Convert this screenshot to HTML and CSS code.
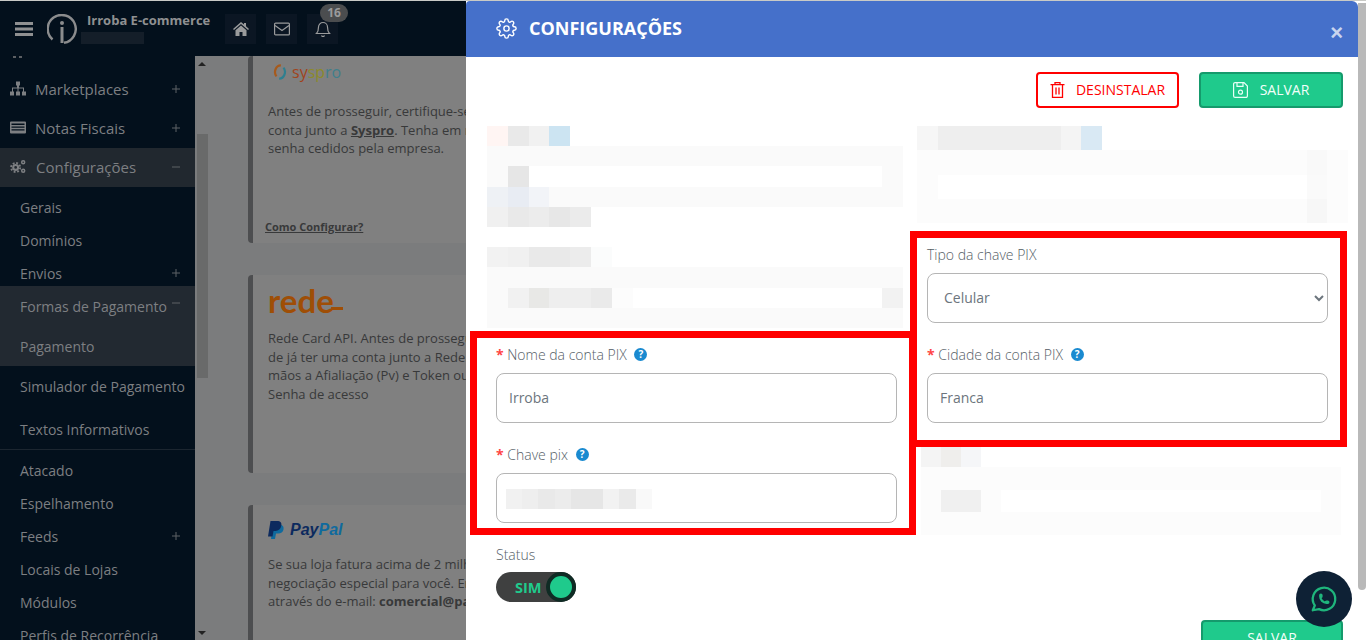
FILE: index.html
```html
<!DOCTYPE html>
<html lang="pt-BR">
<head>
  <meta charset="UTF-8" />
  <title>Configurações - Irroba E-commerce</title>
  <link rel="stylesheet" href="styles.css">
</head>
<body>
  <header class="topbar">
    <svg class="burger" viewBox="0 0 18 14"><path d="M0 0h18v3H0zM0 5.500h18v3H0zM0 11h18v3H0z"/></svg>
    <svg class="brand-logo" viewBox="0 0 30 30" fill="none">
      <path d="M5.500 25.500A14 14 0 1 1 17 28.800" stroke="#8b8c8d" stroke-width="2.400"/>
      <circle cx="15" cy="9" r="2" fill="#8b8c8d"/>
      <path d="M15 13v16" stroke="#8b8c8d" stroke-width="3"/>
    </svg>
    <div class="brand">
      <b>Irroba E-commerce</b>
      <span class="brand-hidden"></span>
    </div>
    <div class="top-actions">
      <a class="top-btn"><svg viewBox="0 0 16 14"><path fill="#9a9b9c" d="M8 0l3 2.600V1h2v3.300L16 7l-1 1-7-6-7 6-1-1zM2.500 8.200L8 3.500l5.500 4.700V14H9.500v-4h-3v4h-4z"/></svg></a>
      <a class="top-btn"><svg viewBox="0 0 16 13" fill="none" stroke="#9a9b9c" stroke-width="1.200"><rect x=".6" y=".6" width="14.800" height="11.800" rx="1"/><path d="M1 3l7 5 7-5"/></svg></a>
      <a class="top-btn"><svg viewBox="0 0 14 16" fill="none" stroke="#9a9b9c" stroke-width="1.200"><path d="M7 1.500a4.500 4.500 0 0 0-4.500 4.500c0 4-1.500 6-2 6.500h13c-.5-.5-2-2.500-2-6.500A4.500 4.500 0 0 0 7 1.500zM5.500 14.500a1.600 1.600 0 0 0 3 0"/></svg><span class="badge">16</span></a>
    </div>
  </header>

  <div class="shell">
    <nav class="sidebar">
      <div class="nav-cut"><i></i><i></i></div>
      <a class="nav-main">
        <svg viewBox="0 0 16 14"><path fill="#7d7f82" d="M6 0h4v4H9v2h5v4h2v4h-4v-4h1V7H8.500v3H10v4H6v-4h1.500V7H3v3h1v4H0v-4h2V6h5V4H6z"/></svg>
        Marketplaces<svg class="sign" viewBox="0 0 8 8"><path d="M4 0v8M0 4h8"/></svg>
      </a>
      <a class="nav-main">
        <svg viewBox="0 0 16 14"><path fill="#7d7f82" fill-rule="evenodd" d="M1 1h14a1 1 0 0 1 1 1v10a1 1 0 0 1-1 1H1a1 1 0 0 1-1-1V2a1 1 0 0 1 1-1zm.500 2v1.500h13V3zm0 3v1.200h13V6zm0 2.700v1.200h13V8.700z"/></svg>
        Notas Fiscais<svg class="sign" viewBox="0 0 8 8"><path d="M4 0v8M0 4h8"/></svg>
      </a>
      <a class="nav-main nav-open">
        <svg viewBox="0 0 17 15"><g fill="none" stroke="#7d7f82"><circle cx="6" cy="8.500" r="2.600" stroke-width="2.200"/><circle cx="6" cy="8.500" r="4.800" stroke-width="2" stroke-dasharray="2 1.770"/><circle cx="14" cy="3" r="1.600" stroke-width="1.600"/><circle cx="14" cy="12" r="1.600" stroke-width="1.600"/></g></svg>
        Configurações<svg class="sign" viewBox="0 0 8 8"><path d="M0 4h8"/></svg>
      </a>
      <a class="nav-sub nav-first">Gerais</a>
      <a class="nav-sub">Domínios</a>
      <a class="nav-sub nav-envios">Envios<svg class="sign" viewBox="0 0 8 8"><path d="M4 0v8M0 4h8"/></svg></a>
      <div class="nav-group">
        <a class="nav-sub nav-tall">Formas de Pagamento<svg class="sign sign-up" viewBox="0 0 8 8"><path d="M0 4h8"/></svg></a>
        <a class="nav-sub nav-tall">Pagamento</a>
      </div>
      <a class="nav-sub nav-tall">Simulador de Pagamento</a>
      <a class="nav-sub nav-tall nav-last">Textos Informativos</a>
      <a class="nav-sub nav-first">Atacado</a>
      <a class="nav-sub">Espelhamento</a>
      <a class="nav-sub">Feeds<svg class="sign" viewBox="0 0 8 8"><path d="M4 0v8M0 4h8"/></svg></a>
      <a class="nav-sub">Locais de Lojas</a>
      <a class="nav-sub">Módulos</a>
      <a class="nav-sub">Perfis de Recorrência</a>
    </nav>

    <div class="side-scroll">
      <span class="arrow arrow-up"></span>
      <span class="thumb"></span>
      <span class="arrow arrow-down"></span>
    </div>

    <main class="content">
      <section class="card card-syspro">
        <div class="logo-syspro">
          <svg viewBox="0 0 16 18" fill="none" stroke-width="2.500"><path d="M9 1.500a6.500 7.500 0 0 0-5 12.500" stroke="#a65a1c"/><path d="M7 16.500a6.500 7.500 0 0 0 5-12.500" stroke="#2f7f8f"/></svg>
          <span class="logo-word"><span class="sy">sy</span><span class="sp">sp</span><span class="ro">ro</span></span>
        </div>
        <p>Antes de prosseguir, certifique-se de já ter uma<br>conta junto a <b><u>Syspro</u></b>. Tenha em mãos os dados e<br>senha cedidos pela empresa.</p>
        <a class="how-to">Como Configurar?</a>
      </section>
      <section class="card card-rede">
        <div class="logo-rede"><span>rede</span><i></i></div>
        <p>Rede Card API. Antes de prosseguir, certifique-se<br>de já ter uma conta junto a Rede. Tenha em<br>mãos a Afialiação (Pv) e Token ou<br>Senha de acesso</p>
      </section>
      <section class="card card-paypal">
        <div class="logo-paypal">
          <svg viewBox="0 0 16 18"><path fill="#0f6a9e" d="M5 4h7c3 0 4 2 3.500 4.500S13 12.500 10 12.500H8L7 18H3z"/><path fill="#0c2a5e" d="M2.500 0H9c3.500 0 5 2 4.300 4.800C12.700 8 10.500 10 7.500 10H5.500L4.500 15.500H0z"/></svg>
          <span class="logo-word"><span class="pay">Pay</span><span class="pal">Pal</span></span>
        </div>
        <p>Se sua loja fatura acima de 2 milhões, temos uma<br>negociação especial para você. Entre em contato<br>através do e-mail: <b>comercial@paypal.com</b></p>
      </section>
    </main>
  </div>

  <div class="modal">
    <div class="modal-head">
      <svg class="head-gear" viewBox="0 0 24 24" fill="none" stroke="#fff" stroke-width="1.600"><circle cx="12" cy="12" r="3"/><path d="M19.400 15a1.650 1.650 0 0 0 .33 1.820l.06.06a2 2 0 0 1 0 2.830 2 2 0 0 1-2.830 0l-.06-.06a1.650 1.650 0 0 0-1.820-.33 1.650 1.650 0 0 0-1 1.510V21a2 2 0 0 1-2 2 2 2 0 0 1-2-2v-.09A1.650 1.650 0 0 0 9 19.400a1.650 1.650 0 0 0-1.820.33l-.06.06a2 2 0 0 1-2.830 0 2 2 0 0 1 0-2.830l.06-.06a1.650 1.650 0 0 0 .33-1.820 1.650 1.650 0 0 0-1.510-1H3a2 2 0 0 1-2-2 2 2 0 0 1 2-2h.09A1.650 1.650 0 0 0 4.600 9a1.650 1.650 0 0 0-.33-1.820l-.06-.06a2 2 0 0 1 0-2.830 2 2 0 0 1 2.830 0l.06.06a1.650 1.650 0 0 0 1.820.33H9a1.650 1.650 0 0 0 1-1.510V3a2 2 0 0 1 2-2 2 2 0 0 1 2 2v.09a1.650 1.650 0 0 0 1 1.510 1.650 1.650 0 0 0 1.820-.33l.06-.06a2 2 0 0 1 2.830 0 2 2 0 0 1 0 2.830l-.06.06a1.650 1.650 0 0 0-.33 1.820V9a1.650 1.650 0 0 0 1.510 1H21a2 2 0 0 1 2 2 2 2 0 0 1-2 2h-.09a1.650 1.650 0 0 0-1.510 1z"/></svg>
      <h2>CONFIGURAÇÕES</h2>
      <span class="close">×</span>
    </div>

    <div class="modal-body">
      <div class="modal-actions">
        <button class="btn btn-danger">
          <svg viewBox="0 0 14 16" fill="none" stroke="#f00" stroke-width="1.300"><path d="M0 2.700h14M4.500 2.700V.7h5v2M2 2.700V15.300h10V2.700M5.500 5.500v7M8.500 5.500v7"/></svg>
          DESINSTALAR
        </button>
        <button class="btn btn-save">
          <svg viewBox="0 0 15 16" fill="none" stroke="#e8fff6" stroke-width="1.200"><path d="M.6 2.100a1.500 1.500 0 0 1 1.500-1.500H11l3.400 3.400v9.900a1.500 1.500 0 0 1-1.500 1.500H2.100a1.500 1.500 0 0 1-1.500-1.500z"/><path d="M4 .6v3.800h6V.6"/><circle cx="7.500" cy="10.200" r="2"/></svg>
          SALVAR
        </button>
      </div>

      <div class="columns">
        <div class="col-left">
          <div class="blur">
            <div class="bl h20"><i class="x21 c-fff5"></i><i class="x21 c-e9"></i><i class="x20 c-f1"></i><i class="x21 c-blue"></i></div>
            <div class="bl h20 fill-fa"></div>
            <div class="bl h21 fill-fa"><i class="x21"></i><i class="x21 c-e6"></i><i class="grow c-ff"></i><i class="x21"></i></div>
            <div class="bl h20 fill-fa"><i class="x21 c-ef"></i><i class="x21 c-e8b"></i><i class="x20 c-f3"></i></div>
            <div class="bl h20"><i class="x21 c-f0"></i><i class="x21 c-e9"></i><i class="x20 c-ec"></i><i class="x21 c-e7"></i><i class="x21 c-eb"></i></div>
            <div class="bl h20"></div>
            <div class="bl h20"><i class="x21 c-f2"></i><i class="x21 c-f0"></i><i class="x20 c-e9"></i><i class="x21 c-e9"></i><i class="x21 c-ec"></i><i class="x21 c-fb"></i></div>
            <div class="bl h21 fill-fa"></div>
            <div class="bl h20 fill-fa"><i class="x21"></i><i class="x21 c-f1"></i><i class="x20 c-e8"></i><i class="x42 c-ee"></i><i class="x21 c-ea"></i><i class="x21 c-fc"></i><i class="grow c-ff"></i><i class="x21 c-f2"></i></div>
            <div class="bl h20 fill-fa"></div>
          </div>

          <div class="pix-box pix-left">
            <div class="field">
              <label><em>*</em> Nome da conta PIX <span class="help">?</span></label>
              <input type="text" value="Irroba" />
            </div>
            <div class="field">
              <label><em>*</em> Chave pix <span class="help">?</span></label>
              <div class="fake-input">
                <div class="bl key"><i class="x16 c-f1"></i><i class="x16 c-ee"></i><i class="x17 c-e9"></i><i class="x16 c-ec"></i><i class="x32 c-e6"></i><i class="x16 c-f2"></i><i class="x17 c-ea"></i><i class="x16 c-f9"></i></div>
              </div>
            </div>
          </div>

          <div class="status">
            <label>Status</label>
            <div class="toggle"><span>SIM</span><i></i></div>
          </div>
        </div>

        <div class="col-right">
          <div class="blur">
            <div class="bl h24"><i class="x21 c-f6"></i><i class="x123 c-ee"></i><i class="x20 c-f4"></i><i class="x21 c-blue2"></i></div>
            <div class="bl h25 fill-fc"><i class="grow"></i><i class="x20 c-f9"></i><i class="x21"></i></div>
            <div class="bl h24 fill-fc"><i class="x21"></i><i class="grow c-ff"></i><i class="x20 c-fa"></i><i class="x21"></i></div>
            <div class="bl h24 fill-fc"><i class="grow"></i><i class="x20 c-f7"></i><i class="x21"></i></div>
          </div>

          <div class="pix-box pix-right">
            <div class="field">
              <label>Tipo da chave PIX</label>
              <select><option>Celular</option></select>
            </div>
            <div class="field">
              <label><em>*</em> Cidade da conta PIX <span class="help">?</span></label>
              <input type="text" value="Franca" />
            </div>
          </div>

          <div class="blur blur-low">
            <div class="bl h20"><i class="x20 c-f4"></i><i class="x20 c-ef2"></i><i class="x20 c-f6b"></i></div>
            <div class="bl h23 fill-fc"></div>
            <div class="bl h22 fill-fc"><i class="x20"></i><i class="x40 c-f0"></i><i class="x20"></i><i class="grow c-ff"></i><i class="x20"></i></div>
            <div class="bl h23 fill-fc"></div>
          </div>
        </div>
      </div>

      <div class="modal-foot">
        <button class="btn btn-save btn-foot">SALVAR</button>
      </div>
    </div>

    <span class="modal-scroll"></span>
    <a class="whats">
      <svg viewBox="0 0 24 24" fill="none" stroke="#1fb57c" stroke-width="1.800" stroke-linecap="round" stroke-linejoin="round"><path d="M3 21l1.650-3.800a9 9 0 1 1 3.400 2.900L3 21"/><path d="M9 10a.5.5 0 0 0 1 0V9a.5.5 0 0 0-1 0v1a5 5 0 0 0 5 5h1a.5.5 0 0 0 0-1h-1a.5.5 0 0 0 0 1"/></svg>
    </a>
  </div>
</body>
</html>
```

FILE: styles.css
```css
* {
  box-sizing: border-box;
  margin: 0;
  padding: 0;
}

html, body {
  height: 640px;
  overflow: hidden;
}

body {
  font-family: 'Open Sans', sans-serif;
  background: #7b7c7d;
  display: flex;
  flex-direction: column;
}

/* top bar */
.topbar {
  height: 56px;
  flex: none;
  background: #03101c;
  border-top: 1px solid #c9cac6;
  display: flex;
  align-items: center;
  position: relative;
}

.burger {
  width: 18px;
  height: 14px;
  margin: 0 0 0 15px;
  fill: #8f9091;
}

.brand-logo {
  width: 30px;
  height: 30px;
  margin-left: 14px;
}

.brand {
  margin-left: 10px;
  color: #8f9091;
  font-size: 13px;
  line-height: 16px;
  position: relative;
  width: 138px;
  height: 32px;
  margin-top: 6px;
}

.brand b {
  display: block;
  white-space: nowrap;
  margin-top: -4px;
}

.brand-hidden {
  display: block;
  width: 63px;
  height: 12px;
  margin: 4px 0 0 -6px;
  background: #141e29;
}

.top-actions {
  display: flex;
  gap: 10px;
  margin-top: 1px;
}

.top-btn {
  width: 31px;
  height: 30px;
  background: #0b1623;
  display: flex;
  align-items: center;
  justify-content: center;
  position: relative;
}

.top-btn svg {
  width: 16px;
  height: 16px;
}

.badge {
  position: absolute;
  top: -10px;
  left: 13px;
  width: 28px;
  height: 18px;
  border-radius: 9px;
  background: #4b4d4f;
  color: #9a9b9c;
  font-size: 12px;
  font-weight: 700;
  line-height: 18px;
  text-align: center;
}

/* sidebar */
.shell {
  flex: 1;
  display: flex;
  min-height: 0;
}

.sidebar {
  width: 195px;
  flex: none;
  background: #03101c;
  color: #7d7f82;
  font-size: 14px;
  overflow: hidden;
}

.nav-cut {
  height: 14px;
  display: flex;
  gap: 3px;
  padding-left: 13px;
}

.nav-cut i {
  width: 3px;
  height: 2px;
  background: #5c5f63;
}

.nav-main {
  height: 39px;
  display: flex;
  align-items: center;
  padding: 0 0 2px 10px;
  font-size: 15px;
  position: relative;
}

.nav-main > svg:first-child {
  width: 16px;
  height: 15px;
  margin-right: 9px;
  flex: none;
}

.nav-open {
  background: #21282f;
}

.nav-open > svg:first-child {
  margin-right: 10px;
}

.sign {
  position: absolute;
  right: 15px;
  top: 50%;
  width: 8px;
  height: 8px;
  margin-top: -5px;
  stroke: #5f6266;
  stroke-width: 1;
  fill: none;
}

.nav-sub {
  height: 33px;
  display: flex;
  align-items: center;
  padding-left: 20px;
  position: relative;
  white-space: nowrap;
}

.nav-first {
  margin-top: 4px;
}

.nav-envios {
  margin-bottom: -4px;
}

.nav-tall {
  height: 40px;
}

.sign-up {
  margin-top: -7px;
}

.nav-group {
  background: #222931;
  position: relative;
}

.nav-last {
  margin-top: 3px;
  height: 41px;
  border-bottom: 1px solid #1c2630;
}

/* scrollbar next to the sidebar */
.side-scroll {
  width: 13px;
  flex: none;
  position: relative;
}

.thumb {
  position: absolute;
  left: 2px;
  right: 0;
  top: 78px;
  height: 244px;
  background: #696a6a;
}

.arrow {
  position: absolute;
  left: 3px;
  border-left: 4px solid transparent;
  border-right: 4px solid transparent;
}

.arrow-up {
  top: 6px;
  border-bottom: 4px solid #222;
}

.arrow-down {
  bottom: 5px;
  border-top: 4px solid #222;
}

/* payment cards behind the modal */
.content {
  flex: 1;
  padding-left: 40px;
  overflow: hidden;
  color: #38393a;
  font-size: 13px;
  line-height: 18.500px;
}

.card {
  background: #808080;
  border-left: 5px solid #4d4e50;
  border-radius: 4px;
  padding-left: 15px;
  position: relative;
  white-space: nowrap;
}

.card-syspro {
  height: 187px;
  margin-bottom: 32px;
  padding-top: 46px;
}

.card-rede {
  height: 198px;
  margin-bottom: 32px;
  padding-top: 54px;
}

.card-paypal {
  height: 180px;
  padding-top: 50px;
}

.logo-syspro {
  position: absolute;
  left: 20px;
  top: 6px;
  display: flex;
  align-items: center;
  font-size: 16px;
  line-height: 20px;
}

.logo-syspro svg {
  width: 14px;
  height: 18px;
  margin-right: 5px;
}

.sy { color: #a1441c; }
.sp { color: #8c8a2a; }
.ro { color: #3f7f8c; }

.how-to {
  position: absolute;
  left: 12px;
  top: 162px;
  font-size: 11px;
  font-weight: 700;
  line-height: 18px;
  text-decoration: underline;
}

.logo-rede {
  position: absolute;
  left: 15px;
  top: 10px;
  color: #9f4e06;
  font-family: 'Lato', sans-serif;
  font-size: 33px;
  font-weight: 700;
  line-height: 30px;
  display: flex;
  align-items: flex-end;
}

.logo-rede i {
  width: 12px;
  height: 3px;
  margin: 0 0 5px -3px;
  background: #9f4e06;
}

.logo-paypal {
  position: absolute;
  left: 15px;
  top: 16px;
  display: flex;
  align-items: center;
  font-family: 'Liberation Sans', sans-serif;
  font-style: italic;
  font-weight: 700;
  font-size: 16px;
  line-height: 18px;
}

.logo-paypal svg {
  width: 16px;
  height: 18px;
  margin-right: 6px;
}

.pay { color: #0c2a5e; }
.pal { color: #0f6a9e; }

/* modal */
.modal {
  position: absolute;
  top: 1px;
  left: 466px;
  right: 0;
  bottom: 0;
  background: #fff;
  overflow: hidden;
  color: #6c757d;
  font-size: 14px;
}

.modal-head {
  height: 56px;
  width: 892px;
  background: #4570ca;
  border-radius: 4px 6px 0 0;
  display: flex;
  align-items: center;
  padding-left: 30px;
  position: relative;
  color: #fff;
}

.head-gear {
  width: 21px;
  height: 21px;
  margin: -1px 12px 0 0;
}

.modal-head h2 {
  font-size: 18px;
  font-weight: 700;
  line-height: 24px;
  margin-top: -2px;
}

.close {
  position: absolute;
  right: 15px;
  top: 19px;
  font-family: 'Liberation Sans', sans-serif;
  font-size: 22px;
  font-weight: 700;
  line-height: 26px;
  color: #c9d5ee;
}

.modal-body {
  width: 892px;
  padding: 15px 0 0 21px;
}

.modal-actions {
  display: flex;
  justify-content: flex-end;
  gap: 20px;
  padding-right: 15px;
  height: 36px;
  margin-bottom: 18px;
}

.btn {
  height: 36px;
  width: 144px;
  border-radius: 4px;
  font-family: inherit;
  font-size: 14px;
  display: flex;
  align-items: center;
  justify-content: center;
  gap: 11px;
  padding-bottom: 2px;
  background: #fff;
}

.btn svg {
  width: 15px;
  height: 16px;
  margin-top: 2px;
}

.btn-danger {
  width: 143px;
  border: 2px solid #f00;
  color: #f00;
}

.btn-save {
  border: 2px solid #159a6c;
  background: #1fca8c;
  color: #f2fffa;
  gap: 12px;
}

.columns {
  display: grid;
  grid-template-columns: 416px 431px;
  column-gap: 14px;
  align-items: start;
}

/* pixelated blocks hiding the private data */
.bl {
  display: flex;
}

.bl i {
  display: block;
}

.h20 { height: 20px; }
.h21 { height: 21px; }
.h22 { height: 22px; }
.h23 { height: 23px; }
.h24 { height: 24px; }
.h25 { height: 25px; }

.x16 { width: 16px; }
.x17 { width: 17px; }
.x20 { width: 20px; }
.x21 { width: 21px; }
.x32 { width: 32px; }
.x40 { width: 40px; }
.x42 { width: 42px; }
.x123 { width: 123px; }
.grow { flex: 1; }

.fill-fa { background: #fafafa; }
.fill-fc { background: #fcfcfc; }
.c-ff { background: #fff; }
.c-fc { background: #fcfcfc; }
.c-fb { background: #fbfcfc; }
.c-fa { background: #fafafa; }
.c-f9 { background: #f9f9f9; }
.c-f7 { background: #f7f7f7; }
.c-f6 { background: #f6f6f6; }
.c-f6b { background: #f5f6f8; }
.c-f4 { background: #f4f4f4; }
.c-f3 { background: #f2f4f8; }
.c-f2 { background: #f2f2f2; }
.c-f1 { background: #f1f1f1; }
.c-f0 { background: #f0f0f0; }
.c-ef { background: #eef1f5; }
.c-ef2 { background: #efeeec; }
.c-ee { background: #eeeeee; }
.c-ec { background: #ececec; }
.c-eb { background: #ebebeb; }
.c-ea { background: #eaeaea; }
.c-e9 { background: #e9e9e9; }
.c-e8 { background: #e8e8e6; }
.c-e8b { background: #e8ecf3; }
.c-e7 { background: #e7e7e7; }
.c-e6 { background: #e6e6e6; }
.c-fff5 { background: #fff5f3; }
.c-blue { background: #cce4f2; }
.c-blue2 { background: #d9e9f4; }

.blur-low {
  margin: 0 7px 0 4px;
}

/* red marks around the PIX fields */
.pix-box {
  border: 7px solid #f00;
  position: relative;
}

.pix-left {
  margin: 3px -13px 0 -17px;
  height: 204px;
  padding: 0 12px 0 19px;
}

.pix-right {
  margin: 8px 1px 0 -7px;
  height: 216px;
  padding: 0 12px 0 10px;
}

.field {
  height: 100px;
  padding-top: 6px;
}

.field label,
.status label {
  display: flex;
  align-items: center;
  height: 20px;
  margin-bottom: 9px;
  font-weight: 300;
  color: #555e66;
  white-space: pre;
}

.field em {
  font-style: normal;
  font-weight: 700;
  color: #f44;
}

.help {
  display: inline-block;
  width: 13px;
  height: 13px;
  margin-left: 4px;
  border-radius: 50%;
  background: #1a8ad0;
  color: #fff;
  font-size: 10px;
  font-weight: 700;
  line-height: 13px;
  text-align: center;
}

.field input,
.field select,
.fake-input {
  display: block;
  width: 100%;
  height: 50px;
  border: 1px solid #b5b5b5;
  border-radius: 8px;
  background: #fff;
  color: #6c757d;
  font-family: inherit;
  font-size: 14px;
  padding: 0 12px 2px;
}

.fake-input {
  padding: 15px 0 0 9px;
}

.key {
  height: 20px;
}

.status {
  margin: 9px 0 0 9px;
}

.status label {
  margin-bottom: 8px;
}

.toggle {
  width: 80px;
  height: 30px;
  border-radius: 15px;
  background: #3f4040;
  display: flex;
  align-items: center;
  padding-left: 19px;
  justify-content: space-between;
  color: #1fca8c;
  font-size: 14.500px;
  font-weight: 700;
}

.toggle i {
  width: 30px;
  height: 30px;
  border-radius: 50%;
  background: #1fca8c;
  border: 4px solid #0f2b24;
}

.modal-foot {
  display: flex;
  justify-content: flex-end;
  padding-right: 15px;
  margin-top: 18px;
}

.btn-foot {
  width: 142px;
}

.modal-scroll {
  position: absolute;
  right: 0;
  top: 2px;
  width: 8px;
  height: 587px;
  border-radius: 0 0 4px 4px;
  background: #b9b9b9;
}

.whats {
  position: absolute;
  left: 830px;
  top: 570px;
  width: 56px;
  height: 56px;
  border-radius: 50%;
  background: #0e2135;
  display: flex;
  align-items: center;
  justify-content: center;
}

.whats svg {
  width: 30px;
  height: 30px;
}
```
